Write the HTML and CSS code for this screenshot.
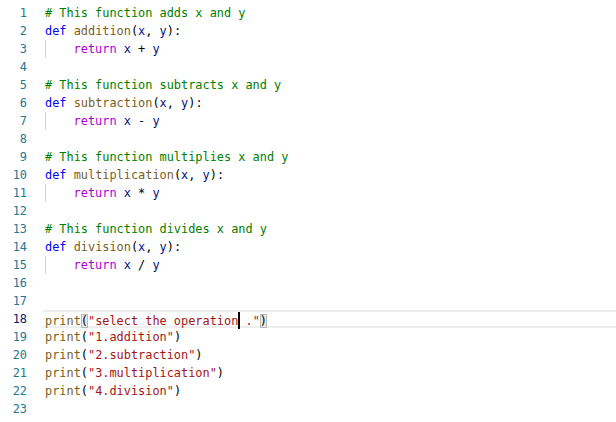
FILE: index.html
```html
<!DOCTYPE html>
<html lang="en">
<head>
    <meta charset="UTF-8">
    <title>calculator.py</title>
    <link rel="stylesheet" href="styles.css">
</head>
<body>
    <div class="editor">
        <div class="line"><span class="ln">1</span><span class="code"><span class="cm"># This function adds x and y</span></span></div>
        <div class="line"><span class="ln">2</span><span class="code"><span class="kw">def</span> <span class="fn">addition</span>(<span class="pr">x</span>, <span class="pr">y</span>):</span></div>
        <div class="line"><span class="ln">3</span><span class="code"><span class="guide"></span><span class="ctl">return</span> <span class="pr">x</span> + <span class="pr">y</span></span></div>
        <div class="line"><span class="ln">4</span><span class="code"></span></div>
        <div class="line"><span class="ln">5</span><span class="code"><span class="cm"># This function subtracts x and y</span></span></div>
        <div class="line"><span class="ln">6</span><span class="code"><span class="kw">def</span> <span class="fn">subtraction</span>(<span class="pr">x</span>, <span class="pr">y</span>):</span></div>
        <div class="line"><span class="ln">7</span><span class="code"><span class="guide"></span><span class="ctl">return</span> <span class="pr">x</span> - <span class="pr">y</span></span></div>
        <div class="line"><span class="ln">8</span><span class="code"></span></div>
        <div class="line"><span class="ln">9</span><span class="code"><span class="cm"># This function multiplies x and y</span></span></div>
        <div class="line"><span class="ln">10</span><span class="code"><span class="kw">def</span> <span class="fn">multiplication</span>(<span class="pr">x</span>, <span class="pr">y</span>):</span></div>
        <div class="line"><span class="ln">11</span><span class="code"><span class="guide"></span><span class="ctl">return</span> <span class="pr">x</span> * <span class="pr">y</span></span></div>
        <div class="line"><span class="ln">12</span><span class="code"></span></div>
        <div class="line"><span class="ln">13</span><span class="code"><span class="cm"># This function divides x and y</span></span></div>
        <div class="line"><span class="ln">14</span><span class="code"><span class="kw">def</span> <span class="fn">division</span>(<span class="pr">x</span>, <span class="pr">y</span>):</span></div>
        <div class="line"><span class="ln">15</span><span class="code"><span class="guide"></span><span class="ctl">return</span> <span class="pr">x</span> / <span class="pr">y</span></span></div>
        <div class="line"><span class="ln">16</span><span class="code"></span></div>
        <div class="line"><span class="ln">17</span><span class="code"></span></div>
        <div class="line active"><span class="ln">18</span><span class="code"><span class="fn">print</span><span class="match">(</span><span class="st">"select the operation<span class="cursor"></span> ."</span><span class="match">)</span></span></div>
        <div class="line"><span class="ln">19</span><span class="code"><span class="fn">print</span>(<span class="st">"1.addition"</span>)</span></div>
        <div class="line"><span class="ln">20</span><span class="code"><span class="fn">print</span>(<span class="st">"2.subtraction"</span>)</span></div>
        <div class="line"><span class="ln">21</span><span class="code"><span class="fn">print</span>(<span class="st">"3.multiplication"</span>)</span></div>
        <div class="line"><span class="ln">22</span><span class="code"><span class="fn">print</span>(<span class="st">"4.division"</span>)</span></div>
        <div class="line"><span class="ln">23</span><span class="code"></span></div>
    </div>
</body>
</html>
```

FILE: styles.css
```css
body {
    margin: 0;
    background-color: #ffffff;
}

.editor {
    padding-top: 4px;
    font-family: "DejaVu Sans Mono", "Liberation Mono", monospace;
    font-size: 11.9px;
    color: #000000;
}

.line {
    display: flex;
    height: 18px;
    line-height: 18px;
    white-space: pre;
}

.ln {
    width: 27px;
    text-align: right;
    color: #237893;
}

.code {
    position: relative;
    flex: 1;
    margin-left: 16px;
    padding-left: 2px;
}

.line.active .ln {
    color: #0b216f;
}

.line.active .code {
    box-sizing: border-box;
    border-top: 2px solid #eeeeee;
    border-bottom: 2px solid #eeeeee;
    line-height: 14px;
}

.guide {
    display: inline-block;
    width: 28.6px;
    height: 18px;
    vertical-align: top;
    box-shadow: inset 1px 0 0 #d3d3d3;
}

.cm { color: #008000; }
.kw { color: #0000ff; }
.ctl { color: #af00db; }
.fn { color: #795e26; }
.pr { color: #001080; }
.st { color: #a31515; }

.match {
    outline: 1px solid #b9b9b9;
    outline-offset: -1px;
    background-color: #e8e8e8;
}

.cursor {
    display: inline-block;
    width: 2px;
    height: 17px;
    margin-right: -2px;
    vertical-align: -4px;
    background-color: #000000;
}
```
